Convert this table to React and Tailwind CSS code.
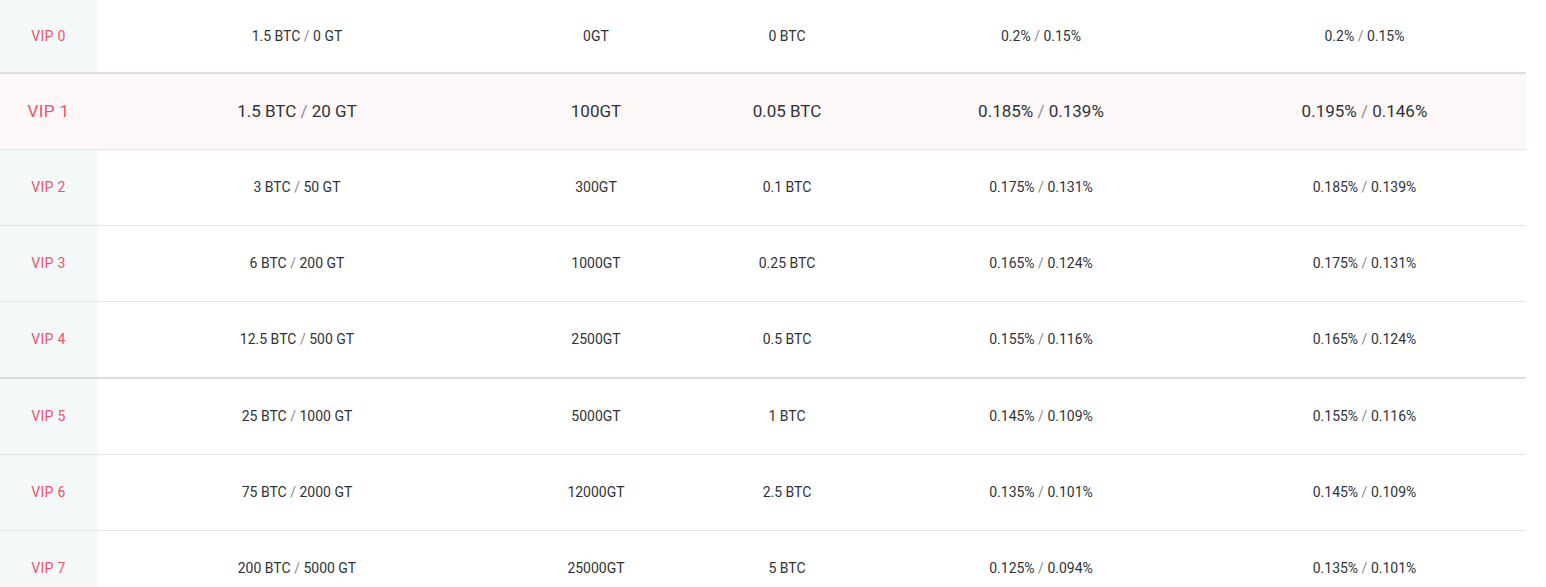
import React from "react";

const rows = [
  { vip: "VIP 0", req: ["1.5 BTC", "0 GT"], gt: "0GT", btc: "0 BTC", a: ["0.2%", "0.15%"], b: ["0.2%", "0.15%"] },
  { vip: "VIP 1", req: ["1.5 BTC", "20 GT"], gt: "100GT", btc: "0.05 BTC", a: ["0.185%", "0.139%"], b: ["0.195%", "0.146%"] },
  { vip: "VIP 2", req: ["3 BTC", "50 GT"], gt: "300GT", btc: "0.1 BTC", a: ["0.175%", "0.131%"], b: ["0.185%", "0.139%"] },
  { vip: "VIP 3", req: ["6 BTC", "200 GT"], gt: "1000GT", btc: "0.25 BTC", a: ["0.165%", "0.124%"], b: ["0.175%", "0.131%"] },
  { vip: "VIP 4", req: ["12.5 BTC", "500 GT"], gt: "2500GT", btc: "0.5 BTC", a: ["0.155%", "0.116%"], b: ["0.165%", "0.124%"] },
  { vip: "VIP 5", req: ["25 BTC", "1000 GT"], gt: "5000GT", btc: "1 BTC", a: ["0.145%", "0.109%"], b: ["0.155%", "0.116%"] },
  { vip: "VIP 6", req: ["75 BTC", "2000 GT"], gt: "12000GT", btc: "2.5 BTC", a: ["0.135%", "0.101%"], b: ["0.145%", "0.109%"] },
  { vip: "VIP 7", req: ["200 BTC", "5000 GT"], gt: "25000GT", btc: "5 BTC", a: ["0.125%", "0.094%"], b: ["0.135%", "0.101%"] },
];

function Pair({ value }) {
  return (
    <span>
      {value[0]} <span className="text-[#888c94]">/</span> {value[1]}
    </span>
  );
}

export default function App() {
  return (
    <div className="w-[1546px] h-[587px] overflow-hidden bg-white font-['Roboto',sans-serif] text-[#2f3338]">
      <div className="w-[1526px] flex flex-col">
        {rows.map((row, i) => {
          const active = i === 1;
          let rowClass = "h-[76px] border-b border-[#e3e4e6]";
          if (i === 0) rowClass = "h-[74px] border-b-2 border-[#dcdddf]";
          if (i === 4) rowClass = "h-[77px] border-b-2 border-[#dcdddf]";
          return (
            <div
              key={row.vip}
              className={`flex items-center shrink-0 ${rowClass} ${active ? "bg-[#fdf7f7] text-[17px]" : "text-[14px]"}`}
            >
              <div
                className={`w-[97px] h-full flex items-center justify-center text-[#e9546b] tracking-wide ${active ? "" : "bg-[#f5f8f9]"}`}
              >
                {row.vip}
              </div>
              <div className="w-[400px] text-center">
                <Pair value={row.req} />
              </div>
              <div className="w-[198px] text-center">{row.gt}</div>
              <div className="w-[184px] text-center">{row.btc}</div>
              <div className="w-[324px] text-center">
                <Pair value={row.a} />
              </div>
              <div className="w-[323px] text-center">
                <Pair value={row.b} />
              </div>
            </div>
          );
        })}
      </div>
    </div>
  );
}
